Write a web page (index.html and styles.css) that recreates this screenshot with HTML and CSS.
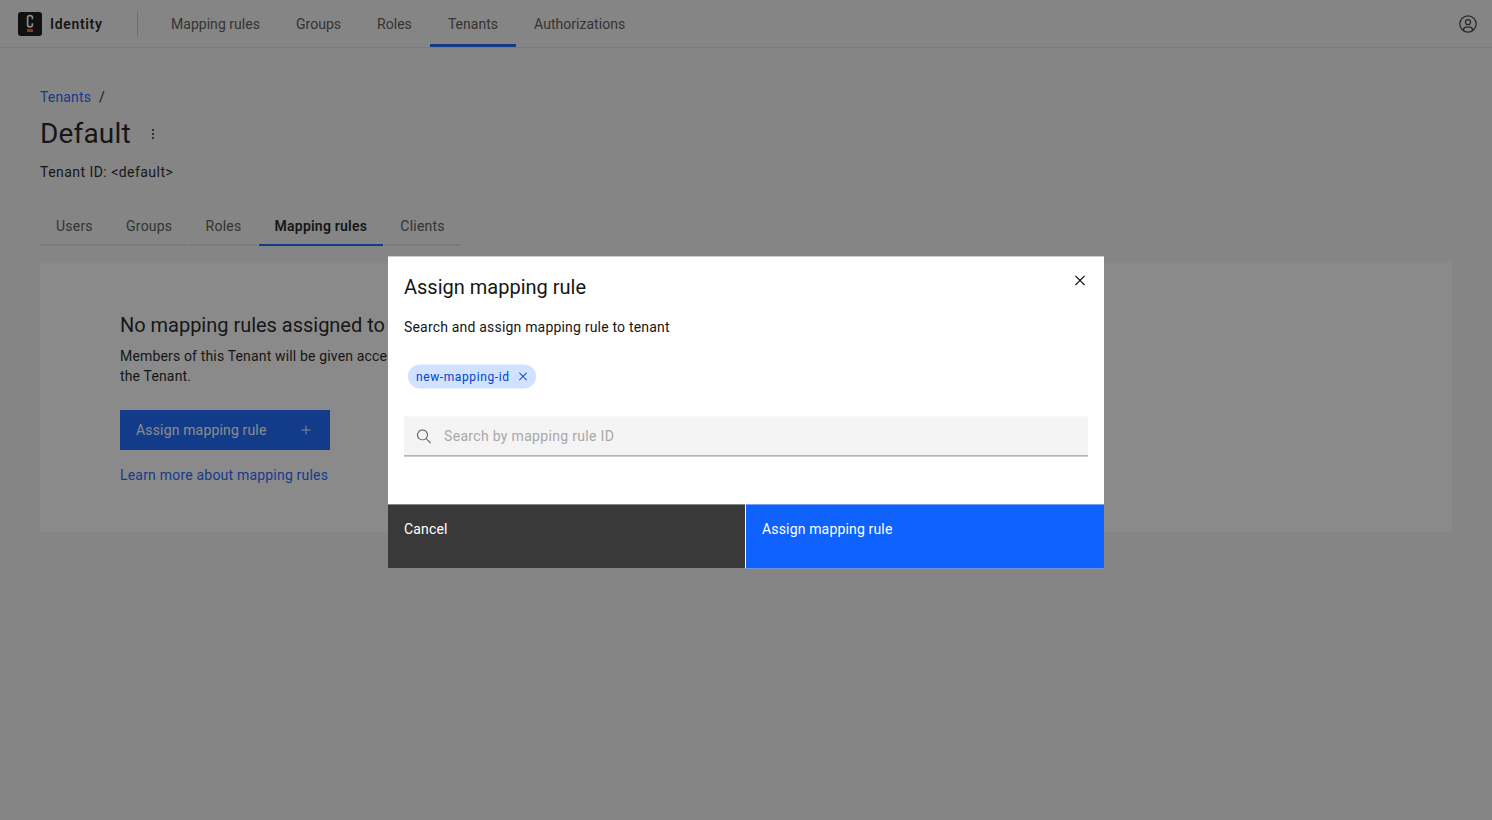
FILE: index.html
```html
<!DOCTYPE html>
<html lang="en">
<head>
<meta charset="utf-8">
<title>Identity</title>
<link rel="stylesheet" href="styles.css">
</head>
<body>
<header class="topbar">
  <div class="brand">
    <svg class="logo" viewBox="0 0 24 24" width="24" height="24" aria-hidden="true">
      <rect width="24" height="24" rx="3" fill="#0c0c0c"/>
      <path d="M14.4 7.2V5.6c0-1.3-.7-2-2-2h-.8c-1.3 0-2 .7-2 2v7.2c0 1.3.7 2 2 2h.8c1.3 0 2-.7 2-2v-1.6" fill="none" stroke="#fff" stroke-width="1.7"/>
      <rect x="9" y="17" width="6" height="3" fill="#fc5d0d"/>
    </svg>
    <span class="brand-name">Identity</span>
  </div>
  <nav class="mainnav">
    <a class="mainnav-item">Mapping rules</a>
    <a class="mainnav-item">Groups</a>
    <a class="mainnav-item">Roles</a>
    <a class="mainnav-item is-active">Tenants</a>
    <a class="mainnav-item">Authorizations</a>
  </nav>
  <svg class="avatar" viewBox="0 0 32 32" width="20" height="20" aria-hidden="true">
    <path d="M16 8a5 5 0 1 0 5 5 5 5 0 0 0-5-5Zm0 8a3 3 0 1 1 3-3 3 3 0 0 1-3 3Z"/>
    <path d="M16 2a14 14 0 1 0 14 14A14 14 0 0 0 16 2Zm-6 24.38V25a3 3 0 0 1 3-3h6a3 3 0 0 1 3 3v1.38a11.88 11.88 0 0 1-12 0Zm14-1.45V25a5 5 0 0 0-5-5h-6a5 5 0 0 0-5 5v-.07a12 12 0 1 1 16 0Z"/>
  </svg>
</header>

<main class="page">
  <div class="crumbs"><a class="link">Tenants</a><span class="crumb-sep">/</span></div>
  <div class="title-row">
    <h1 class="title">Default</h1>
    <svg class="kebab" viewBox="0 0 16 16" width="16" height="16" aria-hidden="true">
      <circle cx="8" cy="4" r="1"/><circle cx="8" cy="8" r="1"/><circle cx="8" cy="12" r="1"/>
    </svg>
  </div>
  <p class="tenant-id">Tenant ID: &lt;default&gt;</p>

  <div class="tabs">
    <a class="tab">Users</a>
    <a class="tab">Groups</a>
    <a class="tab">Roles</a>
    <a class="tab is-active">Mapping rules</a>
    <a class="tab">Clients</a>
  </div>

  <section class="empty">
    <h2 class="empty-title">No mapping rules assigned to this Tenant</h2>
    <p class="empty-text">Members of this Tenant will be given access to the resources assigned to<br>the Tenant.</p>
    <a class="primary-btn">Assign mapping rule
      <svg viewBox="0 0 16 16" width="16" height="16" aria-hidden="true"><path d="M8.5 3.5v4h4v1h-4v4h-1v-4h-4v-1h4v-4z"/></svg>
    </a>
    <a class="link learn">Learn more about mapping rules</a>
  </section>
</main>

<div class="overlay">
  <div class="modal" role="dialog">
    <div class="modal-body">
      <div class="modal-head">
        <h3 class="modal-title">Assign mapping rule</h3>
        <svg class="close" viewBox="0 0 32 32" width="20" height="20" aria-hidden="true">
          <path d="M24 9.4 22.6 8 16 14.6 9.4 8 8 9.4l6.6 6.6L8 22.6 9.4 24l6.6-6.6 6.6 6.6 1.4-1.4-6.6-6.6z"/>
        </svg>
      </div>
      <p class="modal-sub">Search and assign mapping rule to tenant</p>
      <div class="chips">
        <span class="chip"><span class="chip-label">new-mapping-id</span>
          <svg viewBox="0 0 16 16" width="16" height="16" aria-hidden="true"><path d="M12 4.7 11.3 4 8 7.3 4.7 4l-.7.7L7.3 8 4 11.3l.7.7L8 8.7l3.3 3.3.7-.7L8.7 8z"/></svg>
        </span>
      </div>
      <div class="search">
        <svg viewBox="0 0 16 16" width="16" height="16" aria-hidden="true"><path d="M15 14.3 10.7 10c1.9-2.3 1.6-5.8-.7-7.7S4.2.7 2.3 3 .7 8.8 3 10.7c2 1.7 5 1.7 7 0l4.3 4.3.7-.7zM2 6.5C2 4 4 2 6.5 2S11 4 11 6.5 9 11 6.5 11 2 9 2 6.5z"/></svg>
        <span class="placeholder">Search by mapping rule ID</span>
      </div>
    </div>
    <div class="modal-foot">
      <button class="foot-btn secondary">Cancel</button>
      <button class="foot-btn submit">Assign mapping rule</button>
    </div>
  </div>
</div>
</body>
</html>
```

FILE: styles.css
```css
* { box-sizing: border-box; }
html, body { height: 100%; }
body {
  margin: 0;
  background: #f4f4f4;
  color: #161616;
  font-family: Roboto, "Noto Sans", sans-serif;
  font-size: 14px;
  letter-spacing: .16px;
  overflow: hidden;
}
.topbar {
  display: flex;
  align-items: center;
  height: 48px;
  padding: 0 14px 0 18px;
  border-bottom: 1px solid #e0e0e0;
}
.brand {
  display: flex;
  align-items: center;
  gap: 8px;
  width: 120px;
  height: 24px;
  border-right: 1px solid #c6c6c6;
}
.brand-name { font-weight: 600; letter-spacing: .66px; }
.mainnav { display: flex; align-self: stretch; margin-left: 15px; flex: 1; }
.mainnav-item {
  display: flex;
  align-items: center;
  height: 47px;
  padding: 3px 18px 0;
  color: #525252;
  letter-spacing: .03px;
  border-bottom: 3px solid transparent;
}
.mainnav-item.is-active { border-bottom-color: #0f62fe; }
.avatar { fill: #393939; }
.page { padding: 40px 40px 0; }
.link { color: #0f62fe; }
.crumbs { display: flex; gap: 8px; height: 18px; line-height: 18px; }
.title-row { display: flex; align-items: center; gap: 14px; margin-top: 10px; height: 36px; }
.title { margin: 0; font-size: 28px; font-weight: 400; line-height: 36px; }
.kebab { fill: #161616; }
.tenant-id { margin: 11px 0 0; line-height: 18px; letter-spacing: .46px; }
.tabs { display: flex; gap: 1.25px; margin-top: 26px; }
.tab {
  height: 39px;
  padding: 0 16px;
  line-height: 38px;
  color: #525252;
  letter-spacing: .22px;
  border-bottom: 2px solid #e0e0e0;
}
.tab.is-active { color: #161616; font-weight: 600; border-bottom-color: #0f62fe; }
.empty {
  display: flex;
  flex-direction: column;
  align-items: flex-start;
  height: 270px;
  margin-top: 16px;
  padding: 49px 80px 0;
  background: #fff;
}
.empty-title { margin: 0; font-size: 20px; font-weight: 400; line-height: 28px; letter-spacing: -.02px; }
.empty-text { margin: 7px 0 0; line-height: 20px; }
.primary-btn {
  display: flex;
  align-items: center;
  justify-content: space-between;
  width: 210px;
  height: 40px;
  margin-top: 24px;
  padding: 0 16px;
  color: #fff;
  background: #0f62fe;
}
.primary-btn svg { fill: #fff; }
.learn { margin-top: 15px; line-height: 20px; letter-spacing: .2px; }
.overlay {
  position: fixed;
  inset: 0;
  display: flex;
  justify-content: center;
  align-items: flex-start;
  padding-top: 256px;
  background: rgba(22, 22, 22, .5);
}
.modal {
  width: 716px;
  height: 312px;
  display: flex;
  flex-direction: column;
  background: #fff;
  transform: translateY(.4px);
}
.modal-body { flex: 1; padding: 16px; }
.modal-head { display: flex; justify-content: space-between; align-items: flex-start; height: 29px; padding-top: 1px; }
.modal-title { margin: 0; font-size: 20px; font-weight: 400; line-height: 28px; letter-spacing: 0; }
.close { fill: #161616; margin: -3px -2px 0 0; }
.modal-sub { margin: 16px 0 0; line-height: 20px; letter-spacing: .19px; }
.chips { display: flex; margin-top: 27px; padding-left: 4px; }
.chip {
  display: inline-flex;
  align-items: center;
  gap: 5px;
  height: 24px;
  padding: 0 5px 0 8px;
  font-size: 12px;
  letter-spacing: .6px;
  color: #0043ce;
  background: #d0e2ff;
  border-radius: 12px;
}
.chip-label { padding-top: 1px; }
.chip svg { fill: #0043ce; }
.search {
  display: flex;
  align-items: center;
  gap: 12px;
  height: 40px;
  margin-top: 28px;
  padding: 0 12px;
  background: #f4f4f4;
  border-bottom: 1px solid #8d8d8d;
}
.search svg { fill: #525252; }
.placeholder { color: #a8a8a8; letter-spacing: .32px; }
.modal-foot { display: flex; gap: 1px; height: 64px; }
.foot-btn {
  display: flex;
  align-items: flex-start;
  border: 0;
  padding: 15px 16px;
  color: #fff;
  font: inherit;
  line-height: 20px;
  letter-spacing: inherit;
}
.secondary { flex: 0 0 357px; background: #393939; }
.submit { flex: 1; background: #0f62fe; }
```
